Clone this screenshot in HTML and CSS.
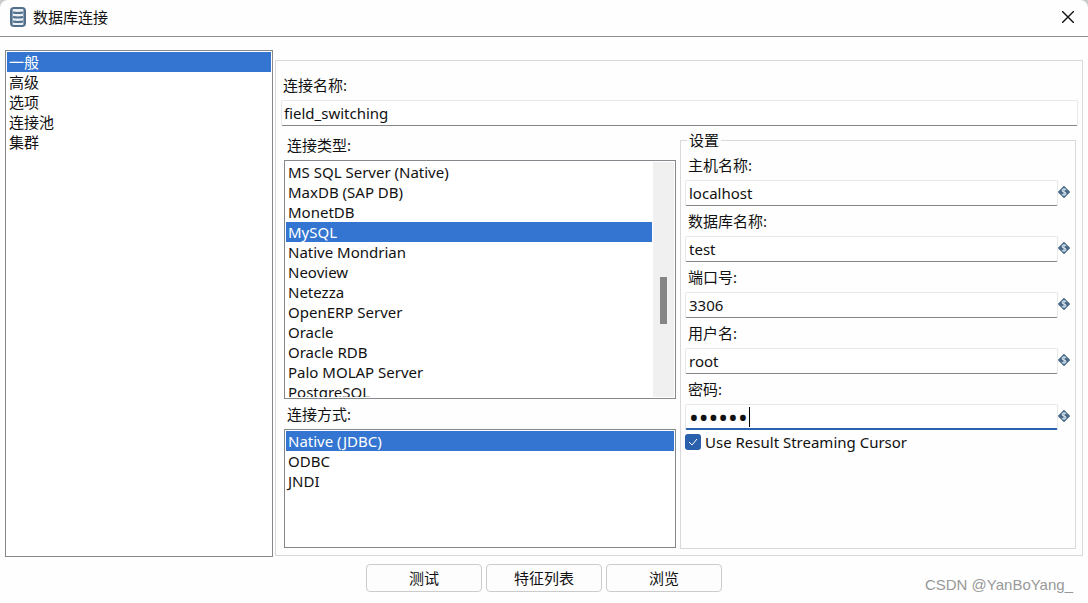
FILE: index.html
```html
<!DOCTYPE html>
<html lang="zh-CN">
<head>
<meta charset="utf-8">
<meta name="viewport" content="width=device-width, initial-scale=1">
<title>数据库连接</title>
<link rel="stylesheet" href="styles.css">
</head>
<body>
<svg class="sprite" aria-hidden="true">
  <symbol id="variable" viewBox="0 0 12 12">
    <path d="M6 0 12 6 6 12 0 6Z" fill="#4b6a88" stroke="#4b6a88" stroke-width="0.500"/>
    <path d="M8 4Q7.500 3 6 3T4.200 4.400Q4.200 5.500 6 6T7.900 7.600Q7.900 9 6 9T4 8M6 2V10" fill="none" stroke="#d7e4ef" stroke-width="1.100"/>
  </symbol>
</svg>
<div class="window">
  <header class="titlebar">
    <svg class="app-icon" viewBox="0 0 16 20" aria-hidden="true">
      <rect x="1" y="1" width="14" height="18" rx="3" fill="#eaf0f5" stroke="#526f8c" stroke-width="2"/>
      <path d="M3 5.500Q8 6.500 13 5.500M3 10Q8 11 13 10M3 14.500Q8 15.500 13 14.500" fill="none" stroke="#526f8c" stroke-width="1.800"/>
      <path d="M2.500 3V17M13.500 3V17" stroke="#8ba0b4"/>
    </svg>
    <h1 class="title">数据库连接</h1>
    <button class="close" type="button" aria-label="关闭">
      <svg class="close-icon" viewBox="0 0 12 12" aria-hidden="true"><path d="M0 0 12 12M12 0 0 12" stroke="#111" stroke-width="1.400"/></svg>
    </button>
  </header>

  <main class="content">
    <ul class="listbox nav" role="listbox" aria-label="类别">
      <li class="item selected" role="option" aria-selected="true">一般</li>
      <li class="item" role="option">高级</li>
      <li class="item" role="option">选项</li>
      <li class="item" role="option">连接池</li>
      <li class="item" role="option">集群</li>
    </ul>

    <section class="panel">
      <div class="name-field">
        <label class="label" for="conn-name">连接名称:</label>
        <input class="input" id="conn-name" type="text" value="field_switching">
      </div>
      <div class="columns">
        <div class="types">
          <h2 class="label" id="type-label">连接类型:</h2>
          <div class="listbox type-box">
            <ul class="options" role="listbox" aria-labelledby="type-label">
              <li class="item" role="option">MS SQL Server (Native)</li>
              <li class="item" role="option">MaxDB (SAP DB)</li>
              <li class="item" role="option">MonetDB</li>
              <li class="item selected" role="option" aria-selected="true">MySQL</li>
              <li class="item" role="option">Native Mondrian</li>
              <li class="item" role="option">Neoview</li>
              <li class="item" role="option">Netezza</li>
              <li class="item" role="option">OpenERP Server</li>
              <li class="item" role="option">Oracle</li>
              <li class="item" role="option">Oracle RDB</li>
              <li class="item" role="option">Palo MOLAP Server</li>
              <li class="item" role="option">PostgreSQL</li>
            </ul>
            <div class="track"><div class="thumb"></div></div>
          </div>
          <h2 class="label method-label" id="method-label">连接方式:</h2>
          <ul class="listbox method-box" role="listbox" aria-labelledby="method-label">
            <li class="item selected" role="option" aria-selected="true">Native (JDBC)</li>
            <li class="item" role="option">ODBC</li>
            <li class="item" role="option">JNDI</li>
          </ul>
        </div>

        <fieldset class="settings">
          <legend class="legend">设置</legend>
          <div class="field">
            <label class="label" for="host">主机名称:</label>
            <div class="row"><input class="input" id="host" type="text" value="localhost"><svg class="var"><use href="#variable"/></svg></div>
          </div>
          <div class="field">
            <label class="label" for="db">数据库名称:</label>
            <div class="row"><input class="input" id="db" type="text" value="test"><svg class="var"><use href="#variable"/></svg></div>
          </div>
          <div class="field">
            <label class="label" for="port">端口号:</label>
            <div class="row"><input class="input" id="port" type="text" value="3306"><svg class="var"><use href="#variable"/></svg></div>
          </div>
          <div class="field">
            <label class="label" for="user">用户名:</label>
            <div class="row"><input class="input" id="user" type="text" value="root"><svg class="var"><use href="#variable"/></svg></div>
          </div>
          <div class="field">
            <label class="label" for="password">密码:</label>
            <div class="row">
              <div class="secret"><input class="input active" id="password" type="password" value="secret"><span class="caret"></span></div>
              <svg class="var"><use href="#variable"/></svg>
            </div>
          </div>
          <label class="check"><input class="checkbox" type="checkbox" checked><svg class="tick" viewBox="0 0 16 16" aria-hidden="true"><path d="M4 8 7 11 12 5" fill="none" stroke="#fff"/></svg>Use Result Streaming Cursor</label>
        </fieldset>
      </div>
    </section>
  </main>

  <footer class="footer">
    <button class="button" type="button">测试</button>
    <button class="button" type="button">特征列表</button>
    <button class="button" type="button">浏览</button>
    <span class="watermark">CSDN @YanBoYang_</span>
  </footer>
</div>
</body>
</html>
```

FILE: styles.css
```css
* {
  box-sizing: border-box;
}

body {
  margin: 0;
  background: #c8cccc;
  color: #111;
  font: 15px/20px "Noto Sans", "Noto Sans CJK SC", sans-serif;
}

input,
button {
  font: inherit;
  color: inherit;
}

ul,
h1,
h2 {
  margin: 0;
  padding: 0;
  font-size: 15px;
  font-weight: 400;
  list-style: none;
}

.sprite {
  position: absolute;
  width: 0;
  height: 0;
}

.window {
  display: flex;
  flex-direction: column;
  min-height: 100vh;
  background: #fefefe;
  border-radius: 8px 8px 0 0;
}

.titlebar {
  display: flex;
  align-items: center;
  height: 37px;
  padding: 0 8px 2px 10px;
  border-bottom: 1px solid #929292;
}

.app-icon {
  width: 16px;
  height: 20px;
  margin-right: 7px;
}

.title {
  flex: 1;
}

.close {
  display: grid;
  place-items: center;
  width: 24px;
  height: 24px;
  padding: 0;
  border: 0;
  background: none;
}

.close-icon {
  width: 12px;
  height: 12px;
}

.content {
  flex: 1;
  display: flex;
  gap: 2px;
  padding: 13px 5px 0;
}

.listbox {
  padding: 1px;
  border: 1px solid #85888c;
  background: #fff;
}

.nav {
  width: 268px;
}

.item {
  height: 20px;
  padding: 0 2px;
  white-space: nowrap;
}

.selected {
  background: #3375d0;
  color: #fff;
}

.panel {
  flex: 1;
  display: flex;
  flex-direction: column;
  min-width: 0;
  margin: 10px 0 1px;
  padding: 14px 4px 6px 5px;
  border: 1px solid #d9d9d9;
}

.name-field .label {
  padding-left: 2px;
}

.label {
  display: block;
  height: 25px;
  line-height: 20px;
}

.input {
  display: block;
  width: 100%;
  height: 26px;
  padding: 0 2px;
  border: 1px solid #e9e9e9;
  border-bottom-color: #858585;
  border-radius: 2px;
  background: #fff;
  outline: none;
}

.columns {
  flex: 1;
  display: grid;
  grid-template-columns: minmax(0, 98fr) minmax(0, 99fr);
  gap: 4px;
  padding: 4px 2px 0 3px;
}

.types {
  display: flex;
  flex-direction: column;
  padding-top: 5px;
  padding-bottom: 1px;
}

.types .label {
  padding-left: 3px;
}

.type-box {
  display: flex;
  height: 239px;
}

.options {
  flex: 1;
  overflow: hidden;
}

.track {
  width: 21px;
  margin-left: 1px;
  padding: 115px 7px 0;
  background: #f0f0f0;
}

.thumb {
  height: 47px;
  background: #858585;
}

.types .method-label {
  height: 30px;
  padding-top: 5px;
}

.method-box {
  flex: 1;
}

.settings {
  min-width: 0;
  margin: 0;
  padding: 6px 5px 0 4px;
  border: 1px solid #d9d9d9;
}

.legend {
  height: 20px;
  margin-bottom: -1px;
  margin-left: 2px;
  padding: 0 2px;
}

.field + .field {
  margin-top: 5px;
}

.field .label {
  padding-left: 3px;
}

.field .input {
  padding: 0 3px;
}

.row {
  display: flex;
}

.var {
  flex: none;
  width: 12px;
  height: 12px;
  margin-top: 6px;
  overflow: visible;
}

.secret {
  position: relative;
  flex: 1;
}

.active {
  border-bottom: 2px solid #2b62af;
  font-size: 26px;
}

.caret {
  position: absolute;
  top: 3px;
  left: 64px;
  width: 1px;
  height: 20px;
  background: #000;
}

.check {
  position: relative;
  display: flex;
  align-items: center;
  gap: 4px;
  margin-top: 2px;
}

.checkbox {
  appearance: none;
  width: 16px;
  height: 16px;
  margin: 0;
  border-radius: 3px;
  background: #2b60ad;
}

.tick {
  position: absolute;
  left: 0;
  width: 16px;
  height: 16px;
}

.footer {
  position: relative;
  display: flex;
  justify-content: center;
  gap: 4px;
  padding: 7px 0 11px;
}

.button {
  width: 116px;
  height: 28px;
  padding: 0;
  border: 1px solid #cbcbcb;
  border-radius: 4px;
  background: #fdfdfd;
}

.watermark {
  position: absolute;
  right: 15px;
  bottom: 8px;
  color: #999;
  font-family: "Liberation Sans", Arial, sans-serif;
}
```
